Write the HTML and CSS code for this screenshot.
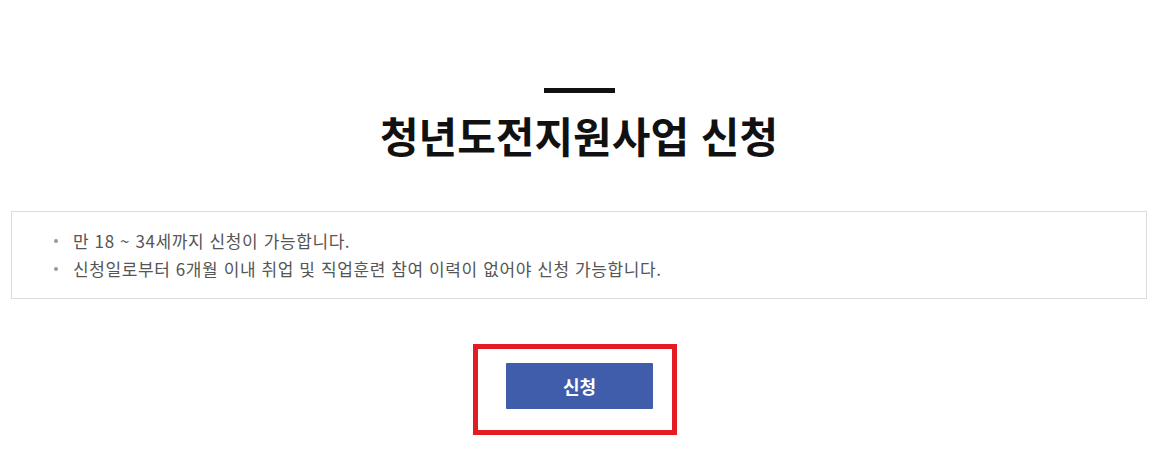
FILE: index.html
```html
<!DOCTYPE html>
<html lang="ko">
<head>
    <meta charset="UTF-8">
    <meta name="viewport" content="width=device-width, initial-scale=1.0">
    <title>청년도전지원사업 신청</title>
    <link rel="stylesheet" href="styles.css">
</head>
<body>
    <div class="wrap">
        <div class="title-bar"></div>
        <h1 class="page-title">청년도전지원사업 신청</h1>

        <div class="notice-box">
            <ul class="notice-list">
                <li>만 18 ~ 34세까지 신청이 가능합니다.</li>
                <li>신청일로부터 6개월 이내 취업 및 직업훈련 참여 이력이 없어야 신청 가능합니다.</li>
            </ul>
        </div>

        <div class="highlight">
            <button class="apply-btn">신청</button>
        </div>
    </div>
</body>
</html>
```

FILE: styles.css
```css
body {
    margin: 0;
    font-family: "Noto Sans CJK KR", "Noto Sans", sans-serif;
    color: #333;
    background: #fff;
}
.wrap {
    width: 1158px;
    padding: 0 11px;
    box-sizing: border-box;
    display: flex;
    flex-direction: column;
    align-items: center;
}
.title-bar {
    width: 71px;
    height: 5px;
    background-color: #111;
    margin-top: 88px;
}
.page-title {
    margin: 17px 0 0;
    font-size: 42px;
    line-height: 50px;
    font-weight: 700;
    color: #111;
}
.notice-box {
    align-self: stretch;
    margin-top: 51px;
    border: 1px solid #dcdcdc;
    padding: 15px 0;
}
.notice-list {
    list-style: none;
    margin: 0;
    padding: 0 0 0 40px;
}
.notice-list li {
    position: relative;
    padding-left: 21px;
    font-size: 17px;
    line-height: 28px;
    letter-spacing: 0.6px;
    color: #555;
}
.notice-list li::before {
    content: "";
    position: absolute;
    left: 2px;
    top: 12px;
    width: 4px;
    height: 4px;
    border-radius: 50%;
    background-color: #999;
}
.highlight {
    margin-top: 45px;
    margin-right: 8px;
    border: 5px solid #e31b23;
    padding: 14px 19px 21px 28px;
}
.apply-btn {
    display: block;
    width: 147px;
    height: 46px;
    border: none;
    border-radius: 1px;
    background-color: #405dab;
    color: #fff;
    font-family: inherit;
    font-size: 18px;
    font-weight: 700;
    cursor: pointer;
}
```
